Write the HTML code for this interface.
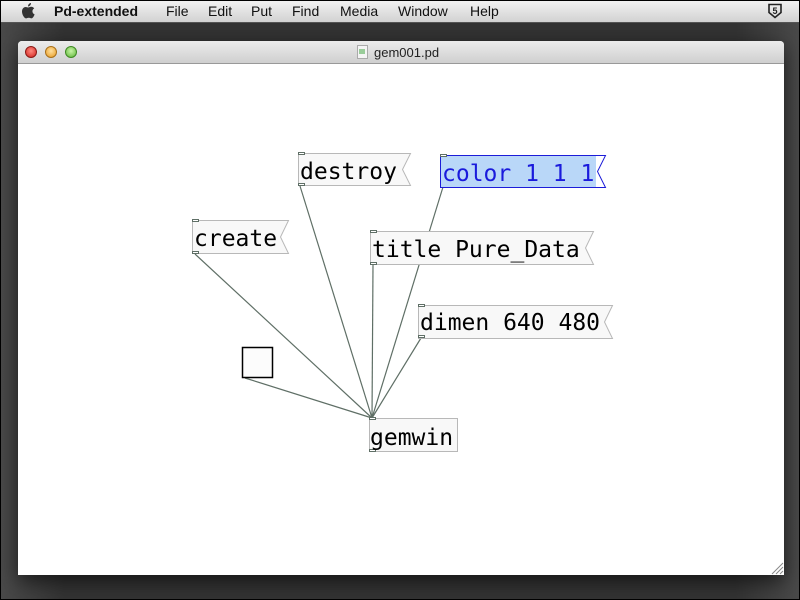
<!DOCTYPE html>
<html><head><meta charset="utf-8"><style>
html,body{margin:0;padding:0;width:800px;height:600px;overflow:hidden;background:#3c3c3c;font-family:"Liberation Sans",sans-serif}
#menu{position:absolute;left:0;top:0;width:800px;height:22px;background:linear-gradient(#f3f3f3,#d2d2d2);border-bottom:1px solid #555;font-size:14px;color:#111}
#menu span{position:absolute;top:3px}
#desk{position:absolute;left:0;top:23px;width:800px;height:577px;background:linear-gradient(90deg,#4a4a4a,#333 8%,#333 92%,#4a4a4a)}
#win{position:absolute;left:18px;top:41px;width:766px;height:534px;background:#fff;box-shadow:0 6px 20px rgba(0,0,0,.6);border-radius:4px 4px 0 0;overflow:hidden}
#tb{height:22px;background:linear-gradient(#ececec,#cfcfcf);border-bottom:1px solid #999;position:relative;font-size:13px;color:#222}
.dot{position:absolute;top:5px;width:12px;height:12px;border-radius:50%}
#frame{position:absolute;left:0;top:0;width:798px;height:598px;border:1px solid #000;pointer-events:none}
</style></head><body>
<div id="desk"></div>
<div id="menu">
<svg style="position:absolute;left:20px;top:2px" width="16" height="18" viewBox="0 0 16 18"><path d="M11 1c0 2-1.5 3.5-3 3.5C8 2.5 9.5 1 11 1zM8 5.5c1 0 2-.8 3.2-.8 1.3 0 2.4.7 3 1.7-2.6 1.4-2.2 5 .4 6-.6 1.7-1.8 4-3.2 4-1 0-1.3-.6-2.6-.6s-1.7.6-2.7.6C4.500 16.400 2 13 2 9.500 2 6.500 4 5 5.700 5c1 0 1.700.5 2.300.5z" fill="#333"/></svg>
<span style="left:54px;font-weight:bold">Pd-extended</span>
<span style="left:166px">File</span><span style="left:208px">Edit</span><span style="left:251px">Put</span><span style="left:292px">Find</span><span style="left:340px">Media</span><span style="left:398px">Window</span><span style="left:470px">Help</span>
<svg style="position:absolute;left:767px;top:3px" width="16" height="16" viewBox="0 0 16 16"><path d="M2 1.500h12v8L8 14.500 2 9.500z" fill="none" stroke="#222" stroke-width="1.6"/><text x="8" y="11" font-size="9" text-anchor="middle" font-family="Liberation Sans" font-weight="bold" fill="#222">5</text></svg>
</div>
<div id="win">
<div id="tb">
<div class="dot" style="left:7px;background:radial-gradient(circle at 50% 40%,#ff8a80,#d0211b);border:1px solid #8a1a16;width:10px;height:10px"></div>
<div class="dot" style="left:27px;background:radial-gradient(circle at 50% 40%,#ffe0a0,#e79a1e);border:1px solid #a8701a;width:10px;height:10px"></div>
<div class="dot" style="left:47px;background:radial-gradient(circle at 50% 40%,#c9f5a8,#5cb536);border:1px solid #3f8a24;width:10px;height:10px"></div>
<svg style="position:absolute;left:339px;top:4px" width="11" height="14"><rect x=".5" y=".5" width="10" height="13" fill="#f4f4f4" stroke="#aaa"/><rect x="2" y="4" width="6" height="5" fill="#9c9"/></svg>
<span style="position:absolute;left:356px;top:4px">gem001.pd</span>
</div>
<svg style="position:absolute;right:0;bottom:0" width="14" height="14"><g stroke="#888"><line x1="13" y1="2" x2="2" y2="13"/><line x1="13" y1="6" x2="6" y2="13"/><line x1="13" y1="10" x2="10" y2="13"/></g></svg>
</div>
<svg style="position:absolute;left:0;top:0" width="800" height="600" font-family="'DejaVu Sans Mono',monospace" font-size="23">
<g stroke="#5f6f66" stroke-width="1.2">
<line x1="300" y1="186" x2="372" y2="418"/>
<line x1="443" y1="187" x2="372" y2="418"/>
<line x1="195" y1="254" x2="372" y2="418"/>
<line x1="373" y1="265" x2="372" y2="418"/>
<line x1="421" y1="338" x2="372" y2="418"/>
<line x1="245" y1="378" x2="372" y2="418"/>
</g>
<g fill="#f8f8f8" stroke="#b8b8b8">
<path d="M298.500 153.500h112l-8 16 8 16h-112z"/>
<path d="M192.500 220.500h96l-8 16.500 8 16.500h-96z"/>
<path d="M370.500 231.500h223l-8 16.500 8 16.500h-223z"/>
<path d="M418.500 305.500h194l-8 16.500 8 16.500h-194z"/>
<rect x="369.500" y="418.500" width="88" height="33"/>
</g>
<path d="M440.500 155.500h165l-8 16 8 16h-165z" fill="#fff" stroke="#1c1cd8"/>
<rect x="441" y="156" width="155" height="31" fill="#b9d7f8"/>
<rect x="242.500" y="347.500" width="30" height="30" fill="#fcfcfc" stroke="#000" stroke-width="1.5"/>
<g fill="#fff" stroke="#5f6f66">
<rect x="298.500" y="152.500" width="6" height="2"/><rect x="298.500" y="183.500" width="6" height="2"/>
<rect x="440.500" y="154.500" width="6" height="2"/>
<rect x="192.500" y="219.500" width="6" height="2"/><rect x="192.500" y="251.500" width="6" height="2"/>
<rect x="370.500" y="230.500" width="6" height="2"/><rect x="370.500" y="262.500" width="6" height="2"/>
<rect x="418.500" y="304.500" width="6" height="2"/><rect x="418.500" y="335.500" width="6" height="2"/>
<rect x="369.500" y="417.500" width="6" height="2"/><rect x="369.500" y="449.500" width="6" height="2"/>
</g>
<text x="300" y="179">destroy</text>
<text x="442" y="181" fill="#1a1adc">color 1 1 1</text>
<text x="194" y="246">create</text>
<text x="372" y="257">title Pure_Data</text>
<text x="420" y="330">dimen 640 480</text>
<text x="370" y="445">gemwin</text>
</svg>
<div id="frame"></div>
</body></html>
